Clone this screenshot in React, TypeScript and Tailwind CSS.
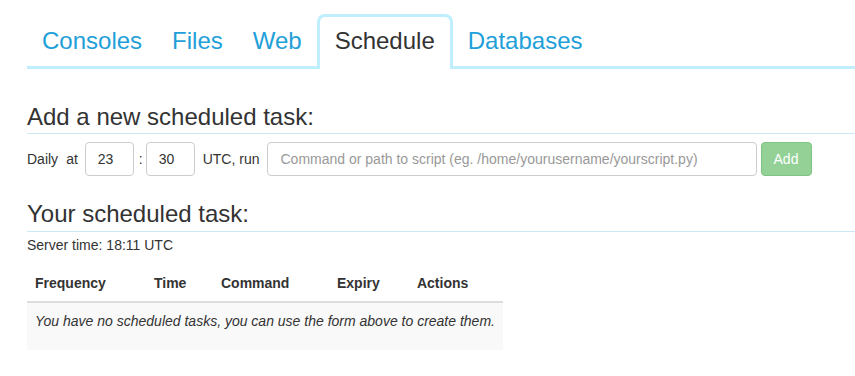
import React from 'react';

const tabs = ['Consoles', 'Files', 'Web', 'Schedule', 'Databases'];

const columns: { label: string; width: string }[] = [
  { label: 'Frequency', width: 'w-[119px]' },
  { label: 'Time', width: 'w-[67px]' },
  { label: 'Command', width: 'w-[116px]' },
  { label: 'Expiry', width: 'w-[80px]' },
  { label: 'Actions', width: 'w-[94px]' },
];

const App: React.FC = () => {
  return (
    <div
      className="min-h-[376px] bg-white pl-[27px] text-[14px] leading-[20px] text-[#333]"
      style={{ fontFamily: '"Liberation Sans", Arial, Helvetica, sans-serif' }}
    >
      <div className="h-[14px]" />
      <nav className="flex items-end border-b-[3px] border-[#bfeefd]">
        {tabs.map((tab) =>
          tab === 'Schedule' ? (
            <div
              key={tab}
              className="relative -mb-[3px] rounded-t-[8px] border-[3px] border-b-0 border-[#bfeefd] bg-white px-[15px] pt-[11px] pb-[15px] text-[24px] leading-[26px] text-[#333]"
            >
              {tab}
            </div>
          ) : (
            <a
              key={tab}
              href="#"
              className="px-[15px] pt-[11px] pb-[12px] text-[24px] leading-[26px] text-[#1fa0d9]"
            >
              {tab}
            </a>
          )
        )}
      </nav>

      <h2 className="mt-[35px] border-b border-[#cbeaf5] pb-[3px] text-[24px] leading-[26px] font-normal">
        Add a new scheduled task:
      </h2>
      <form className="mt-[8px] flex items-center" onSubmit={(e) => e.preventDefault()}>
        <span>Daily</span>
        <span className="ml-[8px]">at</span>
        <input
          defaultValue="23"
          className="ml-[7px] h-[34px] w-[49px] rounded-[4px] border border-[#ccc] px-[12px] text-[14px] text-[#333] outline-none"
        />
        <span className="ml-[5px]">:</span>
        <input
          defaultValue="30"
          className="ml-[3px] h-[34px] w-[49px] rounded-[4px] border border-[#ccc] px-[12px] text-[14px] text-[#333] outline-none"
        />
        <span className="ml-[8px]">UTC, run</span>
        <input
          placeholder="Command or path to script (eg. /home/yourusername/yourscript.py)"
          className="ml-[7px] h-[34px] w-[490px] rounded-[4px] border border-[#ccc] px-[13px] text-[14px] text-[#333] outline-none placeholder:text-[#999]"
        />
        <button
          type="submit"
          className="ml-[4px] h-[34px] w-[51px] rounded-[4px] border border-[#80c484] bg-[#93d197] text-[14px] text-white"
        >
          Add
        </button>
      </form>

      <h2 className="mt-[25px] border-b border-[#cbeaf5] pb-[4px] text-[24px] leading-[26px] font-normal">
        Your scheduled task:
      </h2>
      <p className="mt-[3px]">Server time: 18:11 UTC</p>

      <table className="mt-[10px] w-[476px] border-collapse">
        <thead>
          <tr>
            {columns.map((c) => (
              <th
                key={c.label}
                className={`${c.width} border-b-2 border-[#ddd] px-[8px] py-[8px] text-left font-bold leading-[20px]`}
              >
                {c.label}
              </th>
            ))}
          </tr>
        </thead>
        <tbody>
          <tr>
            <td colSpan={5} className="bg-[#f9f9f9] px-[8px] pt-[8px] pb-[9px]">
              <p className="mb-[10px] italic">
                You have no scheduled tasks, you can use the form above to create them.
              </p>
            </td>
          </tr>
        </tbody>
      </table>
    </div>
  );
};

export default App;
